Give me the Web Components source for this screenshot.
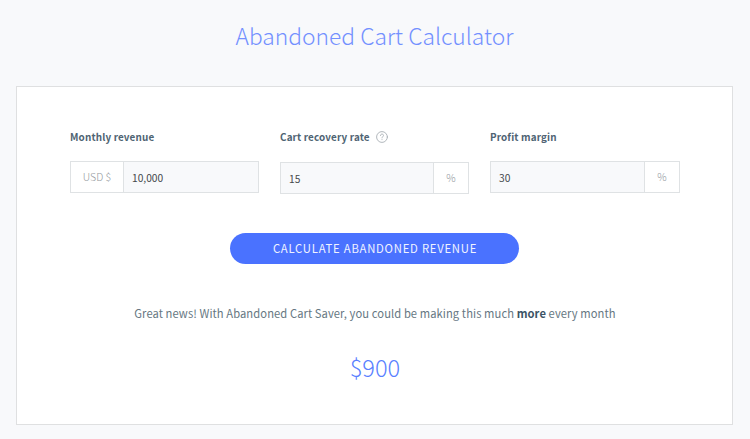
<!DOCTYPE html>
<html lang="en">
<head>
<meta charset="utf-8">
<title>Abandoned Cart Calculator</title>
<style>
html, body { margin: 0; height: 100%; background: #f8f9fb; }
body { font-family: "Noto Sans CJK SC", "Noto Sans", sans-serif; color: #3e5463; }
</style>
</head>
<body>
<cart-calculator></cart-calculator>
<script>
class CalcField extends HTMLElement {
  connectedCallback() {
    const prefix = this.getAttribute('prefix');
    const suffix = this.getAttribute('suffix');
    this.attachShadow({ mode: 'open' }).innerHTML = `
      <style>
        :host { display: block; }
        .label { display: flex; align-items: center; height: 16px; gap: 6px; font-weight: 700; font-size: 9.9px; letter-spacing: .15px; line-height: 16px; color: #4f6473; white-space: nowrap; }
        .box { display: flex; box-sizing: border-box; height: 32px; margin-top: var(--box-gap, 16px); border: 1px solid #dfe2e4; }
        .addon { flex: none; box-sizing: border-box; display: flex; align-items: center; justify-content: center; font-weight: 300; color: #94999e; font-size: 10.5px; line-height: 30px; background: #fff; }
        .pre { width: 53px; border-right: 1px solid #dfe2e4; }
        .suf { width: 35px; border-left: 1px solid #dfe2e4; }
        .value { flex: 1; padding: 1px 0 0 8px; font-size: 10.2px; line-height: 30px; color: #44484c; background: #f8f9fb; }
      </style>
      <div class="label"><span><slot></slot></span><slot name="hint"></slot></div>
      <div class="box">
        ${prefix ? `<div class="addon pre"><span>${prefix}</span></div>` : ''}
        <div class="value"><span>${this.getAttribute('value')}</span></div>
        ${suffix ? `<div class="addon suf"><span>${suffix}</span></div>` : ''}
      </div>`;
  }
}
customElements.define('calc-field', CalcField);

class HintIcon extends HTMLElement {
  connectedCallback() {
    this.attachShadow({ mode: 'open' }).innerHTML = `
      <style>:host { display: block; width: 12px; height: 12px; margin-top: -1px; } svg { display: block; }</style>
      <svg width="12" height="12" viewBox="0 0 12 12" fill="none" stroke="#a9b0b6" stroke-width=".9" stroke-linecap="round">
        <circle cx="6" cy="6" r="5.4"/>
        <path d="M4.5 4.6C4.5 3.6 5.1 3.1 6 3.1S7.5 3.6 7.5 4.5C7.5 5.5 6 5.6 6 6.9"/>
        <path d="M6 8.6V8.7"/>
      </svg>`;
  }
}
customElements.define('hint-icon', HintIcon);

class PillButton extends HTMLElement {
  connectedCallback() {
    this.attachShadow({ mode: 'open' }).innerHTML = `
      <style>
        :host { display: block; width: 289px; height: 31px; }
        button { display: block; box-sizing: border-box; width: 100%; height: 100%; padding: 0 0 1px 1px; border: 0; border-radius: 16px; background: #4a72ff; color: #f0f3ff; font: 400 11.3px/30px "Noto Sans CJK SC", sans-serif; letter-spacing: .75px; text-align: center; }
      </style>
      <button><slot></slot></button>`;
  }
}
customElements.define('pill-button', PillButton);

class CartCalculator extends HTMLElement {
  connectedCallback() {
    this.attachShadow({ mode: 'open' }).innerHTML = `
      <style>
        :host { display: block; box-sizing: border-box; height: 439px; padding: 0 17px 0 16px; overflow: hidden; }
        h1 { margin: 0; padding-top: 16px; height: 86px; box-sizing: border-box; font-weight: 200; font-size: 22.8px; line-height: 40px; color: #7390ff; text-align: center; white-space: nowrap; }
        .card { box-sizing: border-box; height: 339px; border: 1px solid #dfe0e1; background: #fff; padding: 42px 52px 0 53px; display: flex; flex-direction: column; align-items: center; }
        .fields { align-self: flex-start; display: grid; grid-template-columns: 189px 189px 190px; column-gap: 21px; height: 66px; }
        pill-button { margin: 38px 1px 0 0; }
        p { margin: 37px 0 0; font-size: 11.2px; letter-spacing: .08px; line-height: 24px; color: #667782; white-space: nowrap; }
        b { color: #3c5465; }
        .total { margin-top: 22px; font-size: 23.6px; line-height: 40px; font-weight: 300; color: #5a7fff; }
      </style>
      <h1><span>Abandoned Cart Calculator</span></h1>
      <div class="card">
        <div class="fields">
          <calc-field prefix="USD $" value="10,000">Monthly revenue</calc-field>
          <calc-field suffix="%" value="15" style="--box-gap:17px">Cart recovery rate<hint-icon slot="hint"></hint-icon></calc-field>
          <calc-field suffix="%" value="30">Profit margin</calc-field>
        </div>
        <pill-button>CALCULATE ABANDONED REVENUE</pill-button>
        <p>Great news! With Abandoned Cart Saver, you could be making this much <b>more</b> every month</p>
        <div class="total">$900</div>
      </div>`;
  }
}
customElements.define('cart-calculator', CartCalculator);
</script>
</body>
</html>
